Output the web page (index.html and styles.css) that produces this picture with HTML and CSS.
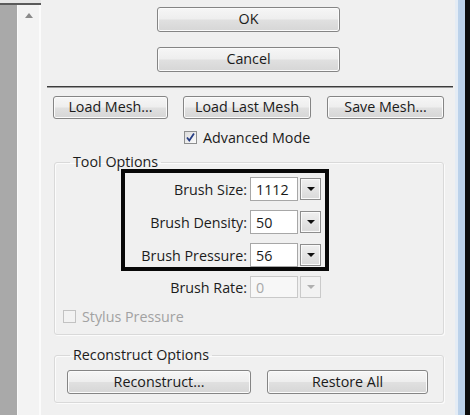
FILE: index.html
```html
<!DOCTYPE html>
<html>
<head>
<meta charset="utf-8">
<link rel="stylesheet" href="styles.css">
</head>
<body>
<div class="window">
  <div class="side">
    <div class="side-top"></div>
    <div class="side-line"></div>
    <div class="side-body">
      <div class="gray-strip"></div>
      <div class="scroll-col"><span class="up-arrow"></span></div>
    </div>
  </div>
  <div class="main">
    <button class="btn btn-ok">OK</button>
    <button class="btn btn-cancel">Cancel</button>
    <div class="separator"></div>
    <div class="mesh-row">
      <button class="btn btn-load">Load Mesh...</button>
      <button class="btn btn-last">Load Last Mesh</button>
      <button class="btn btn-save">Save Mesh...</button>
    </div>
    <div class="check-row adv">
      <span class="checkbox checked"><svg width="11" height="11" viewBox="0 0 11 11"><path d="M2 5.5 L4.3 8.5 L9 1.5" fill="none" stroke="#263d84" stroke-width="1.8"/></svg></span>
      <span class="check-label">Advanced Mode</span>
    </div>
    <fieldset class="group tool-group">
      <legend>Tool Options</legend>
      <div class="highlight">
        <div class="opt-row">
          <span class="opt-label">Brush Size:</span>
          <span class="combo-text">1112</span>
          <span class="combo-btn"><span class="tri"></span></span>
        </div>
        <div class="opt-row">
          <span class="opt-label">Brush Density:</span>
          <span class="combo-text">50</span>
          <span class="combo-btn"><span class="tri"></span></span>
        </div>
        <div class="opt-row">
          <span class="opt-label">Brush Pressure:</span>
          <span class="combo-text">56</span>
          <span class="combo-btn"><span class="tri"></span></span>
        </div>
      </div>
      <div class="opt-row rate-row disabled">
        <span class="opt-label">Brush Rate:</span>
        <span class="combo-text">0</span>
        <span class="combo-btn"><span class="tri"></span></span>
      </div>
      <div class="check-row stylus disabled">
        <span class="checkbox"></span>
        <span class="check-label">Stylus Pressure</span>
      </div>
    </fieldset>
    <fieldset class="group recon-group">
      <legend>Reconstruct Options</legend>
      <div class="recon-row">
        <button class="btn btn-recon">Reconstruct...</button>
        <button class="btn btn-restore">Restore All</button>
      </div>
    </fieldset>
  </div>
  <div class="frame-right">
    <div class="frame-hi"></div>
    <div class="frame-blue"></div>
    <div class="frame-black"></div>
  </div>
</div>
</body>
</html>
```

FILE: styles.css
```css
* { box-sizing: border-box; }
html, body {
  margin: 0;
  padding: 0;
  width: 470px;
  height: 415px;
  overflow: hidden;
  background: #f0f0f0;
  font-family: "Open Sans", "Noto Sans", sans-serif;
  font-size: 14.3px;
  color: #1c1c1c;
}
.window {
  display: flex;
  height: 415px;
}
.side {
  width: 41px;
  display: flex;
  flex-direction: column;
}
.side-top { height: 3px; background: #e6e6e6; }
.side-line { height: 2px; background: #5a5a5a; }
.side-body { flex: 1; display: flex; }
.gray-strip { width: 17px; background: #a9a9a9; }
.scroll-col {
  width: 24px;
  background: #f3f3f3;
  border-left: 1px solid #fafafa;
  border-right: 2px solid #fbfbfb;
  display: flex;
  justify-content: center;
  padding-top: 8px;
}
.up-arrow {
  width: 0; height: 0;
  border-left: 4px solid transparent;
  border-right: 4px solid transparent;
  border-bottom: 5px solid #8a8a8a;
}
.main {
  width: 414px;
  display: flex;
  flex-direction: column;
  align-items: flex-start;
}
.frame-right { width: 15px; display: flex; }
.frame-hi { width: 3px; background: #e4ecf5; }
.frame-blue { width: 7px; background: #bcd2ea; }
.frame-black { width: 5px; background: #0d0d0d; }

.btn {
  font: inherit;
  color: #1a1a1a;
  border: 1px solid #858585;
  border-radius: 3px;
  background: linear-gradient(#f6f6f6 0%, #eeeeee 48%, #e0e0e0 52%, #d6d6d6 100%);
  box-shadow: inset 0 0 0 1px #fbfbfb;
  padding: 0;
  line-height: 1;
  display: flex;
  align-items: center;
  justify-content: center;
}
.btn-ok { margin: 7px 0 0 116px; width: 183px; height: 25px; }
.btn-cancel { margin: 15px 0 0 116px; width: 183px; height: 25px; }
.separator {
  margin: 14px 0 0 6px;
  width: 406px;
  height: 2px;
  background: #3c3c3c;
  border-bottom: 1px solid #9a9a9a;
}
.mesh-row {
  margin: 8px 0 0 12px;
  display: flex;
  gap: 15px;
}
.mesh-row .btn { height: 23px; }
.btn-load { width: 115px; }
.btn-last { width: 128px; }
.btn-save { width: 117px; margin-left: 1px; }

.check-row {
  display: flex;
  align-items: center;
  height: 16px;
}
.adv { margin: 10px 0 0 143px; }
.checkbox {
  width: 13px;
  height: 13px;
  border: 1px solid #8e8f8f;
  background: linear-gradient(135deg, #dcdcdc, #fbfbfb);
  display: flex;
  align-items: center;
  justify-content: center;
}
.check-label { margin-left: 6px; }
.disabled .checkbox { border-color: #c2c2c2; background: #f2f2f2; }
.disabled .check-label, .disabled .opt-label { color: #a2a2a2; }
.rate-row .opt-label { color: #1c1c1c; }

.group {
  margin: 0 0 0 13px;
  width: 390px;
  border: 1px solid #d9d9d9;
  border-radius: 3px;
  box-shadow: inset 1px 1px 0 #fbfbfb, 1px 1px 0 #fbfbfb;
  padding: 0;
  display: flex;
  flex-direction: column;
  align-items: flex-start;
}
.group legend {
  margin-left: 15px;
  padding: 0 3px;
  line-height: 14px;
}
.tool-group { margin-top: 10px; padding-bottom: 10px; }
.highlight {
  margin-left: 66px;
  width: 208px;
  border: 4px solid #080808;
  padding: 4px 0 0 0;
  display: flex;
  flex-direction: column;
  gap: 9px;
}
.opt-row {
  display: grid;
  grid-template-columns: 123px 48px 21px;
  column-gap: 2px;
  height: 24px;
}
.opt-label {
  text-align: right;
  align-self: center;
  padding-right: 1px;
  white-space: nowrap;
}
.combo-text {
  background: #fff;
  border: 1px solid #a7a7a7;
  padding-left: 5px;
  display: flex;
  align-items: center;
  color: #1a1a1a;
}
.combo-btn {
  border: 1px solid #8d8d8d;
  background: linear-gradient(#f0f0f0, #d9d9d9);
  box-shadow: inset 0 0 0 1px #fafafa;
  display: flex;
  align-items: center;
  justify-content: center;
  margin: 1px 0;
}
.tri {
  width: 0; height: 0;
  border-left: 4px solid transparent;
  border-right: 4px solid transparent;
  border-top: 4px solid #101010;
}
.rate-row { margin: 5px 0 0 70px; height: 22px; }
.rate-row .combo-text { border-color: #c9c9c9; color: #a9a9a9; background: #f7f7f7; }
.rate-row .combo-btn { border-color: #cacaca; background: #f2f2f2; box-shadow: none; margin: 0; }
.rate-row .tri { border-top-color: #b0b0b0; }
.stylus { margin: 10px 0 0 8px; }

.recon-group { margin-top: 13px; padding-bottom: 8px; }
.recon-row {
  margin: 8px 0 0 12px;
  display: flex;
  gap: 16px;
}
.recon-row .btn { height: 24px; }
.btn-recon { width: 184px; }
.btn-restore { width: 161px; }
```
